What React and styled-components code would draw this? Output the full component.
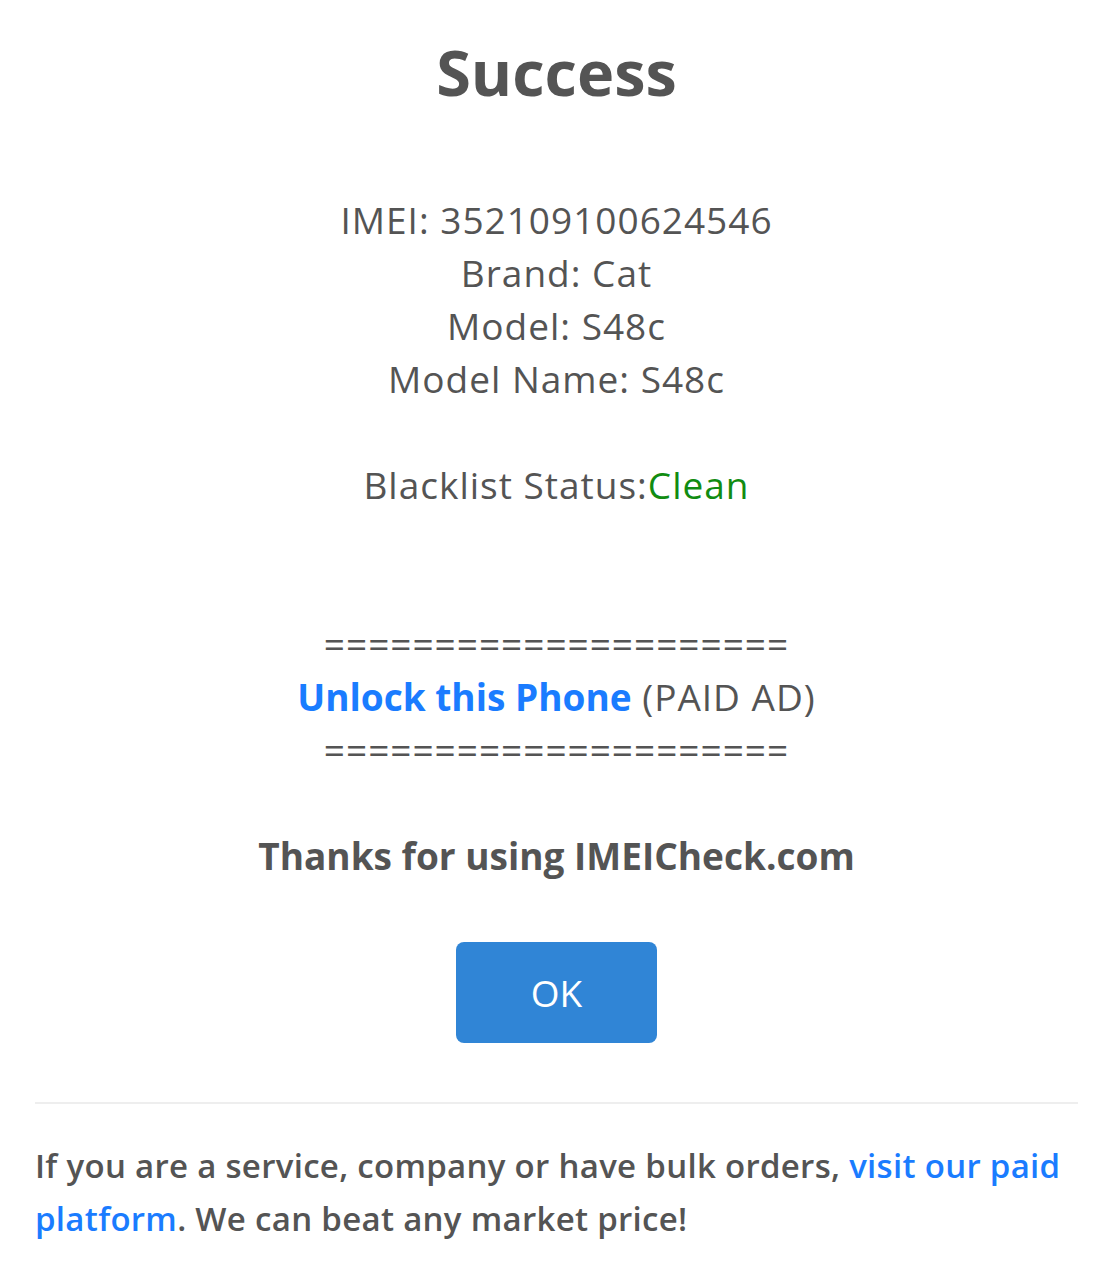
import React from 'react'
import styled, { createGlobalStyle } from 'styled-components'

const GlobalStyle = createGlobalStyle`
  html, body {
    margin: 0;
    padding: 0;
    background: #ffffff;
  }
  body {
    font-family: "Open Sans", "Liberation Sans", sans-serif;
    color: #545454;
  }
`

const Popup = styled.div`
  width: 1109px;
  box-sizing: border-box;
  padding: 35px 31px 40px 35px;
  display: flex;
  flex-direction: column;
  align-items: center;
  background: #fff;
`

const Title = styled.h2`
  margin: 0;
  font-size: 63px;
  line-height: 74px;
  font-weight: 700;
  color: #545454;
  text-align: center;
`

const Content = styled.div`
  margin-top: 84px;
  font-size: 37px;
  line-height: 53px;
  letter-spacing: 1px;
  text-align: center;
  color: #545454;
`

const Line = styled.div`
  min-height: 53px;
`

const Green = styled.span`
  color: #118c11;
`

const AdLink = styled.a`
  color: #1a7cff;
  font-weight: 700;
  letter-spacing: 0;
  text-decoration: none;
`

const Thanks = styled.b`
  font-weight: 700;
  letter-spacing: 0;
`

const OkButton = styled.button`
  margin-top: 60px;
  width: 201px;
  height: 101px;
  border: 0;
  border-radius: 8px;
  background: #3085d6;
  color: #fff;
  font-family: inherit;
  font-size: 37px;
  cursor: pointer;
`

const Footer = styled.div`
  align-self: stretch;
  margin-top: 59px;
  border-top: 2px solid #eeeeee;
  padding-top: 35px;
  font-size: 33px;
  line-height: 53px;
  letter-spacing: 0.3px;
  font-weight: 600;
  color: #545454;
`

const FooterLink = styled.a`
  color: #1a7cff;
  text-decoration: none;
`

const rows = [
  'IMEI: 352109100624546',
  'Brand: Cat',
  'Model: S48c',
  'Model Name: S48c',
]

export default function App() {
  return (
    <>
      <GlobalStyle />
      <Popup>
        <Title>Success</Title>
        <Content>
          {rows.map((r) => (
            <Line key={r}>{r}</Line>
          ))}
          <Line />
          <Line>
            Blacklist Status:<Green>Clean</Green>
          </Line>
          <Line />
          <Line />
          <Line>=====================</Line>
          <Line>
            <AdLink href="#">Unlock this Phone</AdLink> (PAID AD)
          </Line>
          <Line>=====================</Line>
          <Line />
          <Line>
            <Thanks>Thanks for using IMEICheck.com</Thanks>
          </Line>
        </Content>
        <OkButton>OK</OkButton>
        <Footer>
          If you are a service, company or have bulk orders,{' '}
          <FooterLink href="#">visit our paid platform</FooterLink>. We can beat any market price!
        </Footer>
      </Popup>
    </>
  )
}
